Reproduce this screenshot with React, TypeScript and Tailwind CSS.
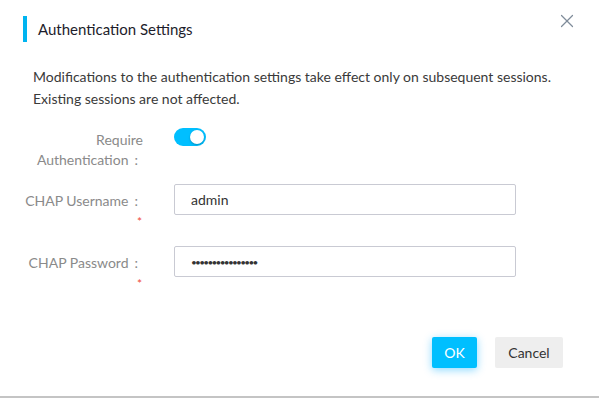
import { X } from 'lucide-react';

const FONT = "font-['Lato','Noto_Sans',sans-serif]";

function Colon() {
  return <span className="ml-[6px] mr-[5px]">:</span>;
}

function FieldLabel({ text, required }: { text: string; required?: boolean }) {
  return (
    <div className="w-[143px] shrink-0 text-right text-[14px] leading-[20px] text-[#8a8a8a]">
      <div>
        {text}
        <Colon />
      </div>
      {required && <div className="pr-[1px] pt-[4px] text-[12px] leading-[14px] text-[#f04a3a]">*</div>}
    </div>
  );
}

export default function App() {
  return (
    <div className={`relative h-[398px] w-[599px] bg-white ${FONT}`}>
      <header className="flex items-center pt-[16px]">
        <span className="ml-[23px] h-[26px] w-[4px] bg-[#00b4f0]" />
        <h1 className="ml-[11px] text-[15px] leading-[26px] text-[#1d1d2b]">Authentication Settings</h1>
        <button className="absolute right-[21px] top-[10px] text-[#7f8c9a]">
          <X size={22} strokeWidth={1.3} />
        </button>
      </header>

      <p className="ml-[33px] mt-[24px] text-[14px] leading-[22px] text-[#3a3a3a]">
        Modifications to the authentication settings take effect only on subsequent sessions.
        <br />
        Existing sessions are not affected.
      </p>

      <div className="mt-[20px] flex flex-col">
        <div className="flex items-start">
          <div className="w-[143px] shrink-0 text-right text-[14px] leading-[20px] text-[#8a8a8a]">
            <div>Require</div>
            <div>
              Authentication
              <Colon />
            </div>
          </div>
          <button className="ml-[31px] mt-[-2px] flex h-[18px] w-[32px] items-center justify-end rounded-full bg-[#00bfff] pr-[2px]">
            <span className="h-[14px] w-[14px] rounded-full bg-white shadow-[0_1px_2px_rgba(0,0,0,0.25)]" />
          </button>
        </div>

        <div className="mt-[14px] flex items-start">
          <div className="pt-[7px]">
            <FieldLabel text="CHAP Username" required />
          </div>
          <input
            readOnly
            value="admin"
            className="ml-[31px] h-[31px] w-[342px] rounded-[2px] border border-[#c9cad3] px-[16px] text-[14px] text-[#333] outline-none"
          />
        </div>

        <div className="mt-[17px] flex items-start">
          <div className="pt-[7px]">
            <FieldLabel text="CHAP Password" required />
          </div>
          <input
            readOnly
            type="password"
            value="1234567890123456"
            className="ml-[31px] h-[31px] w-[342px] rounded-[2px] border border-[#c9cad3] px-[16px] text-[10px] tracking-[-1.7px] text-[#333] outline-none"
          />
        </div>
      </div>

      <footer className="absolute right-[36px] top-[337px] flex gap-[18px]">
        <button className="h-[31px] w-[45px] rounded-[2px] bg-[#00bfff] text-[14px] text-white shadow-[0_2px_8px_rgba(0,170,255,0.45)]">
          OK
        </button>
        <button className="h-[31px] w-[68px] rounded-[2px] bg-[#eeeeee] text-[14px] text-[#333]">Cancel</button>
      </footer>

      <div className="absolute bottom-0 left-0 h-[2px] w-full bg-[#c4c4c4]" />
    </div>
  );
}
